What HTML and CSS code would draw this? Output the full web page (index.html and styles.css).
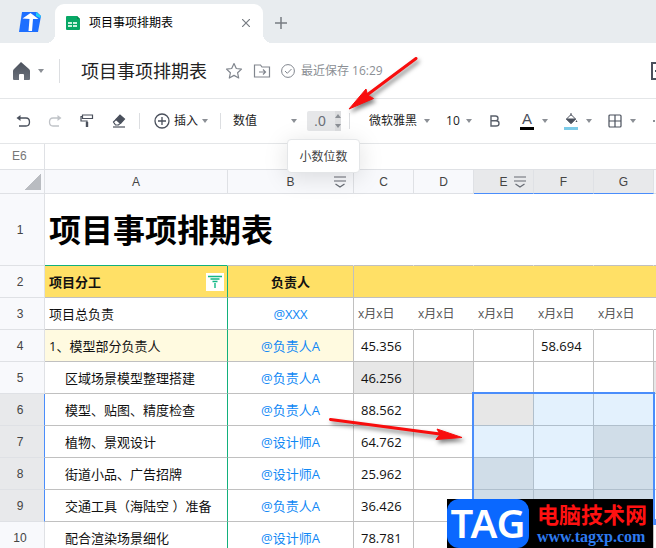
FILE: index.html
```html
<!DOCTYPE html>
<html lang="zh-CN">
<head>
<meta charset="utf-8">
<title>项目事项排期表</title>
<link rel="stylesheet" href="styles.css">
</head>
<body>
<div class="app">
  <nav class="tabs">
    <a class="brand" href="#" aria-label="首页">
      <svg width="24" height="24" viewBox="0 0 24 24"><path d="M4 2h15l4 4-3 16H1z" fill="#1e6fff"/><path d="M18 2l5 4-1 2-4-2z" fill="#1fd0f5"/><path d="M4.500 8.500l8-5.500 8 6h-5.500l-1 12h-3.500l1-12z" fill="#fff"/></svg>
    </a>
    <div class="tab">
      <svg width="14" height="14" viewBox="0 0 14 14"><path d="M1 0h10l3 3v10q0 1-1 1H1q-1 0-1-1V1q0-1 1-1z" fill="#07a866"/><path d="M11 0l3 3h-3z" fill="#078a50"/><path d="M2 6h4v2H2zM7 6h4v2H7zM2 9h4v2H2zM7 9h4v2H7z" fill="#c9f2df"/></svg>
      <span class="tab-name">项目事项排期表</span>
      <button class="plain" aria-label="关闭"><svg width="8" height="8" viewBox="0 0 8 8" stroke="#777c82" stroke-width="1.200"><path d="M0 0l8 8M8 0L0 8"/></svg></button>
    </div>
    <button class="plain add" aria-label="新建"><svg width="12" height="12" viewBox="0 0 12 12" stroke="#777c82" stroke-width="1.500"><path d="M6 0v12M0 6h12"/></svg></button>
  </nav>

  <header class="head">
    <button class="plain home" aria-label="主页"><svg width="18" height="18" viewBox="0 0 18 18"><defs><linearGradient id="hg" x1="0" y1="0" x2="0" y2="1"><stop offset="0" stop-color="#4b515c"/><stop offset="1" stop-color="#6b717b"/></linearGradient></defs><path d="M9 0l8 7q1 1 1 2v8q0 1-1 1h-5v-5q0-1-1-1H8q-1 0-1 1v5H2q-1 0-1-1V9q0-1 1-2z" fill="url(#hg)"/></svg><i class="caret"></i></button>
    <i class="rule tall"></i>
    <h1>项目事项排期表</h1>
    <div class="marks">
      <button class="plain" aria-label="收藏"><svg width="18" height="18" viewBox="0 0 18 18" fill="none" stroke="#81868e" stroke-width="1.200" stroke-linejoin="round"><path d="M9 1.500l2.300 5 5.200.6-3.900 3.700 1.100 5.200L9 13.400 4.300 16l1.100-5.200-3.900-3.700 5.200-.6z"/></svg></button>
      <button class="plain" aria-label="移动到"><svg width="18" height="18" viewBox="0 0 18 18" fill="none" stroke="#81868e" stroke-width="1.200"><path d="M1.500 3h6l1.500 2h7.500v10h-15zM6 10h6M10 7.500l2.500 2.500L10 12.500"/></svg></button>
    </div>
    <p class="saved"><svg width="14" height="14" viewBox="0 0 14 14" fill="none" stroke="#81868e"><circle cx="7" cy="7" r="6.400"/><path d="M4 7l2.300 2.300L10.500 5"/></svg>最近保存 16:29</p>
    <button class="plain edge" aria-label="更多"><svg width="5" height="18" viewBox="0 0 5 18" fill="none" stroke="#4a505c" stroke-width="2"><path d="M5 1H1v16h4M4 9h1"/></svg></button>
  </header>

  <div class="tools" role="toolbar">
    <div class="history">
      <button class="plain" aria-label="撤销"><svg width="16" height="16" viewBox="0 0 16 16" fill="none" stroke="#4a505c" stroke-width="1.300"><path d="M3 5h7q3.500 0 3.500 4t-3.500 4H3"/><path d="M0.500 5l4-3v6z" fill="#4a505c" stroke="none"/></svg></button>
      <button class="plain" aria-label="重做"><svg width="16" height="16" viewBox="0 0 16 16" fill="none" stroke="#c0c3c8" stroke-width="1.300"><path d="M11 5H5q-3.500 0-3.500 4t3.500 4h6"/><path d="M13.500 5l-4-3v6z" fill="#c0c3c8" stroke="none"/></svg></button>
      <button class="plain" aria-label="格式刷"><svg width="16" height="16" viewBox="0 0 16 16" fill="none" stroke="#4a505c" stroke-width="1.200"><path d="M2.500 2h10v3.500h-10zM2.500 3.500H1v4.500h6v3"/><path d="M7 9v5" stroke-width="2.400"/></svg></button>
      <button class="plain" aria-label="清除格式"><svg width="16" height="16" viewBox="0 0 16 16" fill="none" stroke="#4a505c" stroke-width="1.200"><path d="M1.500 9l3-3 4 4-2 2h-3z"/><path d="M4 6.500L8 2l4.500 4L8.500 10.500z" fill="#4a505c"/><path d="M1 14h12"/></svg></button>
    </div>
    <i class="rule"></i>
    <button class="plain insert"><svg width="16" height="16" viewBox="0 0 16 16" fill="none" stroke="#4a505c" stroke-width="1.300"><circle cx="8" cy="8" r="7"/><path d="M8 4v8M4 8h8"/></svg>插入<i class="caret"></i></button>
    <i class="rule"></i>
    <label class="pick format"><select aria-label="数字格式"><option>数值</option></select><i class="caret"></i></label>
    <div class="decimals">
      <span>.0</span>
      <div class="steps"><button class="plain" aria-label="增加"><i class="caret up"></i></button><button class="plain" aria-label="减少"><i class="caret"></i></button></div>
      <div class="tip" role="tooltip">小数位数</div>
    </div>
    <i class="rule"></i>
    <label class="pick family"><select aria-label="字体"><option>微软雅黑</option></select><i class="caret"></i></label>
    <label class="pick size"><select aria-label="字号"><option>10</option></select><i class="caret"></i></label>
    <button class="plain bold" aria-label="加粗"><svg width="10" height="12" viewBox="0 0 10 12" fill="none" stroke="#5a606b" stroke-width="1.400"><path d="M1 1h4.500q2.500 0 2.500 2.400T5.500 5.800H1zM1 5.800h5q3 0 3 2.600T6 11H1z"/></svg></button>
    <button class="plain ink"><span class="glyph">A<b class="bar"></b></span><i class="caret"></i></button>
    <button class="plain ink" aria-label="填充颜色"><span class="glyph"><svg width="14" height="12" viewBox="0 0 14 12" fill="none" stroke="#4a505c"><path d="M7 0v3M7 1.500L2.500 6 7 10.500 11.500 6z"/><path d="M2.500 6h9L7 10.500z" fill="#4a505c"/><path d="M12.500 7l1 2h-2z" fill="#4a505c" stroke="none"/></svg><b class="bar sky"></b></span><i class="caret"></i></button>
    <button class="plain grid" aria-label="边框"><svg width="14" height="14" viewBox="0 0 14 14" fill="none" stroke="#4a505c" stroke-width="1.200"><rect x="1" y="1" width="12" height="12" rx="1"/><path d="M7 1v12M1 7h12"/></svg><i class="caret"></i></button>
    <i class="more"></i>
  </div>

  <div class="formula"><span class="ref">E6</span></div>

  <main class="sheet">
    <table>
      <colgroup><col class="w-n"><col class="w-a"><col class="w-b"><col class="w-d"><col class="w-d"><col class="w-d"><col class="w-d"><col class="w-d"><col></colgroup>
      <thead>
        <tr><th class="corner"></th><th>A</th><th><span class="letter">B<svg class="fold" width="14" height="12" viewBox="0 0 14 12" fill="none" stroke="#666b73" stroke-width="1.200"><path d="M1 1h12M1 5h12M2.500 8L7 11l4.500-3"/></svg></span></th><th>C</th><th>D</th><th class="on"><span class="letter">E<svg class="fold near" width="14" height="12" viewBox="0 0 14 12" fill="none" stroke="#666b73" stroke-width="1.200"><path d="M1 1h12M1 5h12M2.500 8L7 11l4.500-3"/></svg></span></th><th class="on">F</th><th class="on">G</th><th></th></tr>
      </thead>
      <tbody>
        <tr class="banner"><th>1</th><td class="name">项目事项排期表</td><td></td><td></td><td></td><td></td><td></td><td></td><td></td></tr>
        <tr class="gold"><th>2</th><td class="a"><span class="split">项目分工<button class="plain filter" aria-label="筛选"><svg width="14" height="14" viewBox="0 0 14 14" stroke="#12b886" stroke-width="1.400"><path d="M0 1.500h14M2.500 4h9M4.500 6.500h5M7 8v5"/></svg></button></span></td><td class="b">负责人</td><td colspan="6"></td></tr>
        <tr class="dates"><th>3</th><td class="a">项目总负责</td><td class="b"><a href="#">@XXX</a></td><td>x月x日</td><td>x月x日</td><td>x月x日</td><td>x月x日</td><td>x月x日</td><td></td></tr>
        <tr class="cream"><th>4</th><td class="a">1、模型部分负责人</td><td class="b"><a href="#">@负责人A</a></td><td>45.356</td><td></td><td></td><td>58.694</td><td></td><td></td></tr>
        <tr><th>5</th><td class="a in">区域场景模型整理搭建</td><td class="b"><a href="#">@负责人A</a></td><td class="gray">46.256</td><td class="gray"></td><td></td><td></td><td></td><td class="gray"></td></tr>
        <tr class="on"><th>6</th><td class="a in">模型、贴图、精度检查</td><td class="b"><a href="#">@负责人A</a></td><td>88.562</td><td></td><td class="sel gray origin"><div class="range"></div></td><td class="sel"></td><td class="sel"></td><td></td></tr>
        <tr class="on"><th>7</th><td class="a in">植物、景观设计</td><td class="b"><a href="#">@设计师A</a></td><td>64.762</td><td></td><td class="sel"></td><td class="sel"></td><td class="sel dim"></td><td></td></tr>
        <tr class="on"><th>8</th><td class="a in">街道小品、广告招牌</td><td class="b"><a href="#">@设计师A</a></td><td>25.962</td><td></td><td class="sel dim"></td><td class="sel"></td><td class="sel dim"></td><td></td></tr>
        <tr class="on"><th>9</th><td class="a in">交通工具（海陆空 ）准备</td><td class="b"><a href="#">@负责人A</a></td><td>36.426</td><td></td><td class="sel dim"></td><td class="sel dim"></td><td class="sel dim"></td><td></td></tr>
        <tr><th>10</th><td class="a in">配合渲染场景细化</td><td class="b"><a href="#">@设计师A</a></td><td>78.781</td><td></td><td></td><td></td><td></td><td></td></tr>
      </tbody>
    </table>
  </main>

  <svg class="arrows" width="656" height="548" viewBox="0 0 656 548" fill="#f80d0d" stroke="#f80d0d">
    <path d="M416 58.500L367 95" stroke-width="3" stroke-linecap="round"/><path d="M349 109l17-20 1.500 6 6 3.500z"/>
    <path d="M330.500 419.500L440 434" stroke-width="3" stroke-linecap="round"/><path d="M462 437.500l-25-8.500 3 5.500-4 5z"/>
  </svg>

  <aside class="stamp">
    <strong>TAG</strong>
    <div><p class="site">电脑技术网</p><p class="url">www.tagxp.com</p></div>
  </aside>
</div>
</body>
</html>
```
FILE: styles.css
```css
* { box-sizing: border-box; }
body, h1, p { margin: 0; }
body {
  font: 12px/16px "Open Sans", "Noto Sans CJK SC", sans-serif;
  color: #222;
  background: #fff;
}
svg { display: block; flex: none; }
.app { position: relative; height: 100vh; overflow: hidden; }
.plain {
  display: flex;
  align-items: center;
  padding: 0;
  border: 0;
  background: none;
  font: inherit;
  color: inherit;
}
.caret {
  flex: none;
  border: 3px solid transparent;
  border-top: 4px solid #8b8f95;
  border-bottom: 0;
}
.caret.up { transform: rotate(180deg); }
.rule { width: 1px; height: 16px; background: #dcdee1; }
.rule.tall { height: 24px; }

/* Tab strip */
.tabs { display: flex; height: 43px; background: #e8ecef; }
.brand { padding: 10px 0 0 18px; width: 55px; }
.tab {
  position: relative;
  display: flex;
  align-items: center;
  width: 208px;
  margin-top: 4px;
  padding: 0 13px 1px 11px;
  border-radius: 9px 9px 0 0;
  background: #fff;
  color: #000;
}
.tab::before, .tab::after {
  content: "";
  position: absolute;
  bottom: 0;
  width: 9px;
  height: 9px;
}
.tab::before { left: -9px; background: radial-gradient(circle at 0 0, transparent 9px, #fff 9px); }
.tab::after { right: -9px; background: radial-gradient(circle at 100% 0, transparent 9px, #fff 9px); }
.tab-name { flex: 1; margin-left: 9px; }
.add { margin-left: 12px; padding-top: 3px; }

/* Document header */
.head {
  display: flex;
  align-items: center;
  height: 56px;
  padding-left: 12px;
  border-bottom: 1px solid #e4e6e8;
}
.home { gap: 8px; margin-right: 15px; }
h1 { margin-left: 21px; font-size: 18px; line-height: 24px; font-weight: 400; }
.marks { display: flex; gap: 10px; margin: 0 10px 0 18px; }
.saved { display: flex; align-items: center; gap: 6px; color: #8b8f95; }
.edge { margin-left: auto; }

/* Toolbar */
.tools {
  display: flex;
  align-items: center;
  height: 45px;
  padding-left: 16px;
  border-bottom: 1px solid #e4e6e8;
}
.history { display: flex; gap: 16px; margin-right: 11px; }
.insert { gap: 4px; margin: 0 12px 0 14px; }
.pick { display: flex; align-items: center; }
.pick select {
  appearance: none;
  padding: 0;
  border: 0;
  background: none;
  font: inherit;
  color: inherit;
}
.format { justify-content: space-between; width: 64px; margin: 0 10px 0 12px; }
.family { gap: 6px; margin: 0 16px 0 19px; }
.size { gap: 6px; margin-right: 18px; }
.decimals {
  position: relative;
  display: flex;
  align-items: center;
  width: 34px;
  height: 20px;
  margin-right: 8px;
  padding-left: 7px;
  border-radius: 2px;
  background: #e6e7e9;
  color: #6b7078;
  font: 14px/20px "Liberation Sans", sans-serif;
}
.steps {
  display: flex;
  flex-direction: column;
  justify-content: space-around;
  align-items: center;
  width: 6px;
  height: 20px;
  margin-left: auto;
  background: #dcdddf;
}
.tip {
  position: absolute;
  z-index: 2;
  top: 28px;
  left: -20px;
  width: 73px;
  padding: 8px 0;
  border: 1px solid #e4e6e8;
  border-radius: 4px;
  background: #fff;
  box-shadow: 0 4px 24px rgba(0, 0, 0, .13);
  color: #444;
  font: 12px/16px "Noto Sans CJK SC", sans-serif;
  text-align: center;
}
.bold { margin-right: 20px; }
.ink { gap: 8px; margin-right: 16px; }
.glyph {
  display: flex;
  flex-direction: column;
  align-items: center;
  width: 14px;
  color: #4a505c;
  font: 15px/12px "Liberation Sans", sans-serif;
}
.bar { width: 14px; height: 3px; margin-top: 2px; background: #000; }
.bar.sky { background: #7ccbe8; }
.grid { gap: 8px; }
.more { width: 2px; height: 2px; margin-left: 17px; background: #8b8f95; }

/* Name box */
.formula { display: flex; height: 26px; border-bottom: 1px solid #dfe1e5; }
.ref {
  width: 45px;
  padding-left: 12px;
  border-right: 1px solid #dfe1e5;
  color: #777;
  font: 12px/24px "Liberation Sans", sans-serif;
}

/* Sheet */
table { width: 100%; table-layout: fixed; border-collapse: separate; border-spacing: 0; }
.w-n { width: 45px; }
.w-a { width: 183px; }
.w-b { width: 126px; }
.w-d { width: 60px; }
th {
  height: 32px;
  padding: 0;
  border: solid #dfe1e5;
  border-width: 0 1px 1px 0;
  background: #f8f9fc;
  color: #444;
  font: 12px/16px "Liberation Sans", sans-serif;
}
thead th { height: 24px; }
tbody th { padding-right: 4px; }
th.on, .on th { background: #e8e9eb; }
th.on { border-bottom-color: #4a8dfb; }
.on th { border-right-color: #4a8dfb; }
.corner { background: linear-gradient(135deg, transparent 50%, #b9bcc1 50%) no-repeat 25px 4px / 16px 16px #f8f9fc; }
.letter { position: relative; }
.fold { position: absolute; top: 1px; left: 47px; }
.fold.near { left: 14px; }
td {
  height: 32px;
  padding: 0 7px;
  border: solid #c0c0c0;
  border-width: 0 1px 1px 0;
  color: #111;
  font-size: 13px;
  line-height: 20px;
  white-space: nowrap;
}
tr > :last-child { padding: 0; border-right: 0; }
td.a { padding: 0 3px 0 4px; border-right-color: #12b07c; }
td.in { padding-left: 20px; }
td.b { padding: 0; text-align: center; }
td a { color: #0f88f5; text-decoration: none; }
.banner > * { height: 72px; }
.banner td { border-right-color: transparent; }
td.name {
  padding: 0 0 4px 4px;
  border-bottom-color: #12b07c;
  color: #000;
  font: bold 32px/40px "Noto Sans CJK SC", sans-serif;
}
.gold td { background: #ffe066; font-weight: 700; }
.split { display: flex; align-items: center; justify-content: space-between; }
.filter { justify-content: center; width: 18px; height: 18px; background: #fff; }
.dates td:nth-child(n + 4) {
  padding: 0 4px;
  border-right-color: transparent;
  color: #555;
  font-size: 12px;
}
.cream .a, .cream .b { background: #fffae0; }
td.sel { background: #e3f1fd; border-color: #b0bfcc; }
td.dim { background: #d0dde8; }
td.gray { background: #e7e7e7; }
.origin { position: relative; }
.range {
  position: absolute;
  z-index: 1;
  top: -2px;
  left: -2px;
  width: 183px;
  height: 131px;
  border: 2px solid #4a8dfb;
}
.range::after {
  content: "";
  position: absolute;
  right: -4px;
  bottom: -4px;
  width: 6px;
  height: 6px;
  background: #4a8dfb;
}

/* Overlays */
.arrows {
  position: absolute;
  z-index: 3;
  top: 0;
  left: 0;
  pointer-events: none;
  filter: drop-shadow(2px 3px 2px rgba(0, 0, 0, .5));
}
.stamp {
  position: absolute;
  z-index: 4;
  right: 3px;
  bottom: 0;
  display: flex;
  gap: 8px;
  height: 49px;
  padding-right: 6px;
  background: #000;
}
.stamp strong {
  width: 82px;
  border-radius: 12px;
  background: #0a68ff;
  color: #fff;
  font: 600 40px/48px "Noto Sans", sans-serif;
  text-align: center;
}
.site { color: #f11; font: bold 22px/28px "Noto Sans CJK SC", sans-serif; }
.url { color: #2e7bf0; font: bold 16px/20px "Liberation Serif", serif; }
```
